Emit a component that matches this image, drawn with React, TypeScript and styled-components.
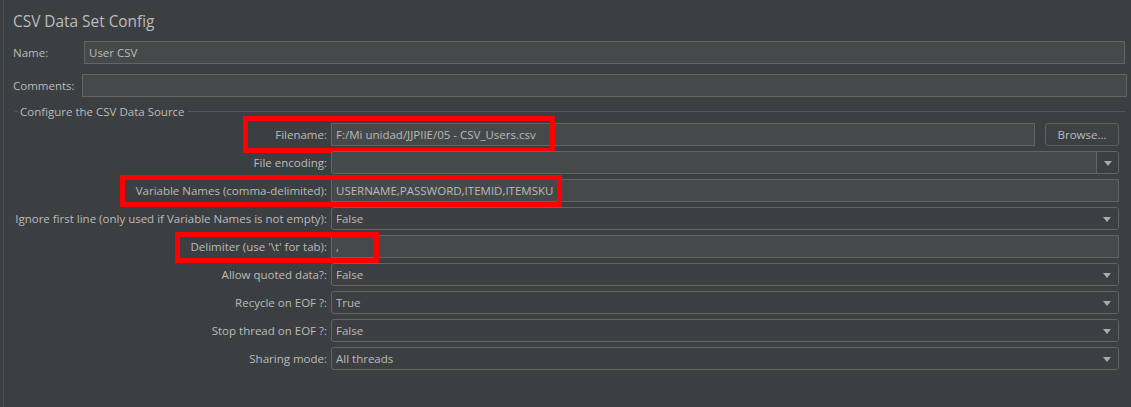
import React from "react";
import styled, { createGlobalStyle } from "styled-components";

const GlobalStyle = createGlobalStyle`
  html, body {
    margin: 0;
    padding: 0;
    background: #3c3f41;
  }
  body {
    font-family: "Open Sans", "Noto Sans", sans-serif;
    color: #bbbbbb;
  }
  * { box-sizing: border-box; }
`;

const Page = styled.div`
  width: 1131px;
  height: 407px;
  padding-left: 3px;
  background: #3c3f41;
  overflow: hidden;
`;

const Panel = styled.div`
  height: 100%;
  border-left: 1px solid #4b4e50;
  padding: 12px 4px 0 9px;
  display: flex;
  flex-direction: column;
`;

const Title = styled.div`
  font-size: 15.4px;
  line-height: 20px;
  height: 20px;
  color: #bbbbbb;
`;

const TopRow = styled.div<{ $mt: number; $mr: number }>`
  display: flex;
  align-items: center;
  height: 23px;
  margin-top: ${(p) => p.$mt}px;
  margin-right: ${(p) => p.$mr}px;
`;

const TopLabel = styled.div<{ $w: number }>`
  width: ${(p) => p.$w}px;
  flex: none;
  font-size: 11.5px;
  color: #bbbbbb;
  white-space: nowrap;
`;

const TextField = styled.div`
  flex: 1;
  min-width: 0;
  height: 23px;
  border: 1px solid #646464;
  background: #45494a;
  color: #bbbbbb;
  padding: 0 4px;
  font-size: 11.5px;
  display: flex;
  align-items: center;
  white-space: nowrap;
`;

const SectionHeader = styled.div`
  margin-top: 8px;
  margin-left: 2px;
  margin-right: 2px;
  height: 13px;
  display: flex;
  align-items: center;
`;

const HeaderLine = styled.div<{ $grow?: boolean }>`
  height: 1px;
  background: #56595b;
  width: ${(p) => (p.$grow ? "auto" : "3px")};
  flex: ${(p) => (p.$grow ? "1" : "none")};
`;

const HeaderText = styled.div`
  font-size: 11.5px;
  line-height: 13px;
  color: #bbbbbb;
  margin: 0 3px 0 2px;
  white-space: nowrap;
`;

const Form = styled.div`
  margin-top: 5px;
  padding-right: 8px;
  display: flex;
  flex-direction: column;
  gap: 5px;
`;

const Row = styled.div`
  position: relative;
  display: grid;
  grid-template-columns: 314px 1fr;
  column-gap: 4px;
  height: 23px;
`;

const RowLabel = styled.div`
  display: flex;
  justify-content: flex-end;
  align-items: center;
  font-size: 11.5px;
  color: #bbbbbb;
  white-space: nowrap;
`;

const FieldGroup = styled.div`
  display: flex;
  gap: 10px;
  min-width: 0;
`;

const BrowseButton = styled.div`
  width: 74px;
  flex: none;
  height: 23px;
  border: 1px solid #5e6060;
  border-radius: 3px;
  background: linear-gradient(#404345, #3c3f41);
  font-size: 11.5px;
  color: #bbbbbb;
  display: flex;
  align-items: center;
  justify-content: center;
`;

const Combo = styled.div<{ $editable?: boolean }>`
  height: 23px;
  border: 1px solid #646464;
  border-radius: 3px;
  background: ${(p) => (p.$editable ? "#45494a" : "#3c3f41")};
  display: flex;
  align-items: stretch;
  overflow: hidden;
`;

const ComboText = styled.div`
  flex: 1;
  padding-left: 4px;
  font-size: 11.5px;
  color: #bbbbbb;
  display: flex;
  align-items: center;
  white-space: nowrap;
`;

const ArrowBox = styled.div<{ $editable?: boolean }>`
  width: 22px;
  flex: none;
  display: flex;
  align-items: center;
  justify-content: center;
  background: #3c3f41;
  border-left: ${(p) => (p.$editable ? "1px solid #646464" : "none")};
`;

const Arrow = styled.div`
  width: 0;
  height: 0;
  border-left: 4px solid transparent;
  border-right: 4px solid transparent;
  border-top: 5px solid #a9a9a9;
  margin-top: 1px;
`;

const RedMark = styled.div`
  position: absolute;
  border: 5px solid #ff0000;
  pointer-events: none;
`;

type ComboProps = { value: string; editable?: boolean };

const ComboBox = ({ value, editable }: ComboProps) => (
  <Combo $editable={editable}>
    <ComboText>{value}</ComboText>
    <ArrowBox $editable={editable}>
      <Arrow />
    </ArrowBox>
  </Combo>
);

type Mark = { left: number; top: number; width: number; height: number };

const FormRow = ({
  label,
  children,
  mark,
}: {
  label: string;
  children: React.ReactNode;
  mark?: Mark;
}) => (
  <Row>
    <RowLabel>{label}</RowLabel>
    {children}
    {mark && (
      <RedMark
        style={{
          left: mark.left,
          top: mark.top,
          width: mark.width,
          height: mark.height,
        }}
      />
    )}
  </Row>
);

export default function App() {
  return (
    <>
      <GlobalStyle />
      <Page>
        <Panel>
          <Title>CSV Data Set Config</Title>
          <TopRow $mt={9} $mr={2}>
            <TopLabel $w={71}>Name:</TopLabel>
            <TextField>User CSV</TextField>
          </TopRow>
          <TopRow $mt={10} $mr={0}>
            <TopLabel $w={69}>Comments:</TopLabel>
            <TextField />
          </TopRow>
          <SectionHeader>
            <HeaderLine />
            <HeaderText>Configure the CSV Data Source</HeaderText>
            <HeaderLine $grow />
          </SectionHeader>
          <Form>
            <FormRow
              label="Filename:"
              mark={{ left: 230, top: -7, width: 312, height: 37 }}
            >
              <FieldGroup>
                <TextField>F:/Mi unidad/JJPIIE/05 - CSV_Users.csv</TextField>
                <BrowseButton>Browse...</BrowseButton>
              </FieldGroup>
            </FormRow>
            <FormRow label="File encoding:">
              <ComboBox value="" editable />
            </FormRow>
            <FormRow
              label="Variable Names (comma-delimited):"
              mark={{ left: 107, top: -4, width: 442, height: 32 }}
            >
              <TextField>USERNAME,PASSWORD,ITEMID,ITEMSKU</TextField>
            </FormRow>
            <FormRow label="Ignore first line (only used if Variable Names is not empty):">
              <ComboBox value="False" />
            </FormRow>
            <FormRow
              label="Delimiter (use '\t' for tab):"
              mark={{ left: 162, top: -3, width: 204, height: 31 }}
            >
              <TextField>,</TextField>
            </FormRow>
            <FormRow label="Allow quoted data?:">
              <ComboBox value="False" />
            </FormRow>
            <FormRow label="Recycle on EOF ?:">
              <ComboBox value="True" />
            </FormRow>
            <FormRow label="Stop thread on EOF ?:">
              <ComboBox value="False" />
            </FormRow>
            <FormRow label="Sharing mode:">
              <ComboBox value="All threads" />
            </FormRow>
          </Form>
        </Panel>
      </Page>
    </>
  );
}
